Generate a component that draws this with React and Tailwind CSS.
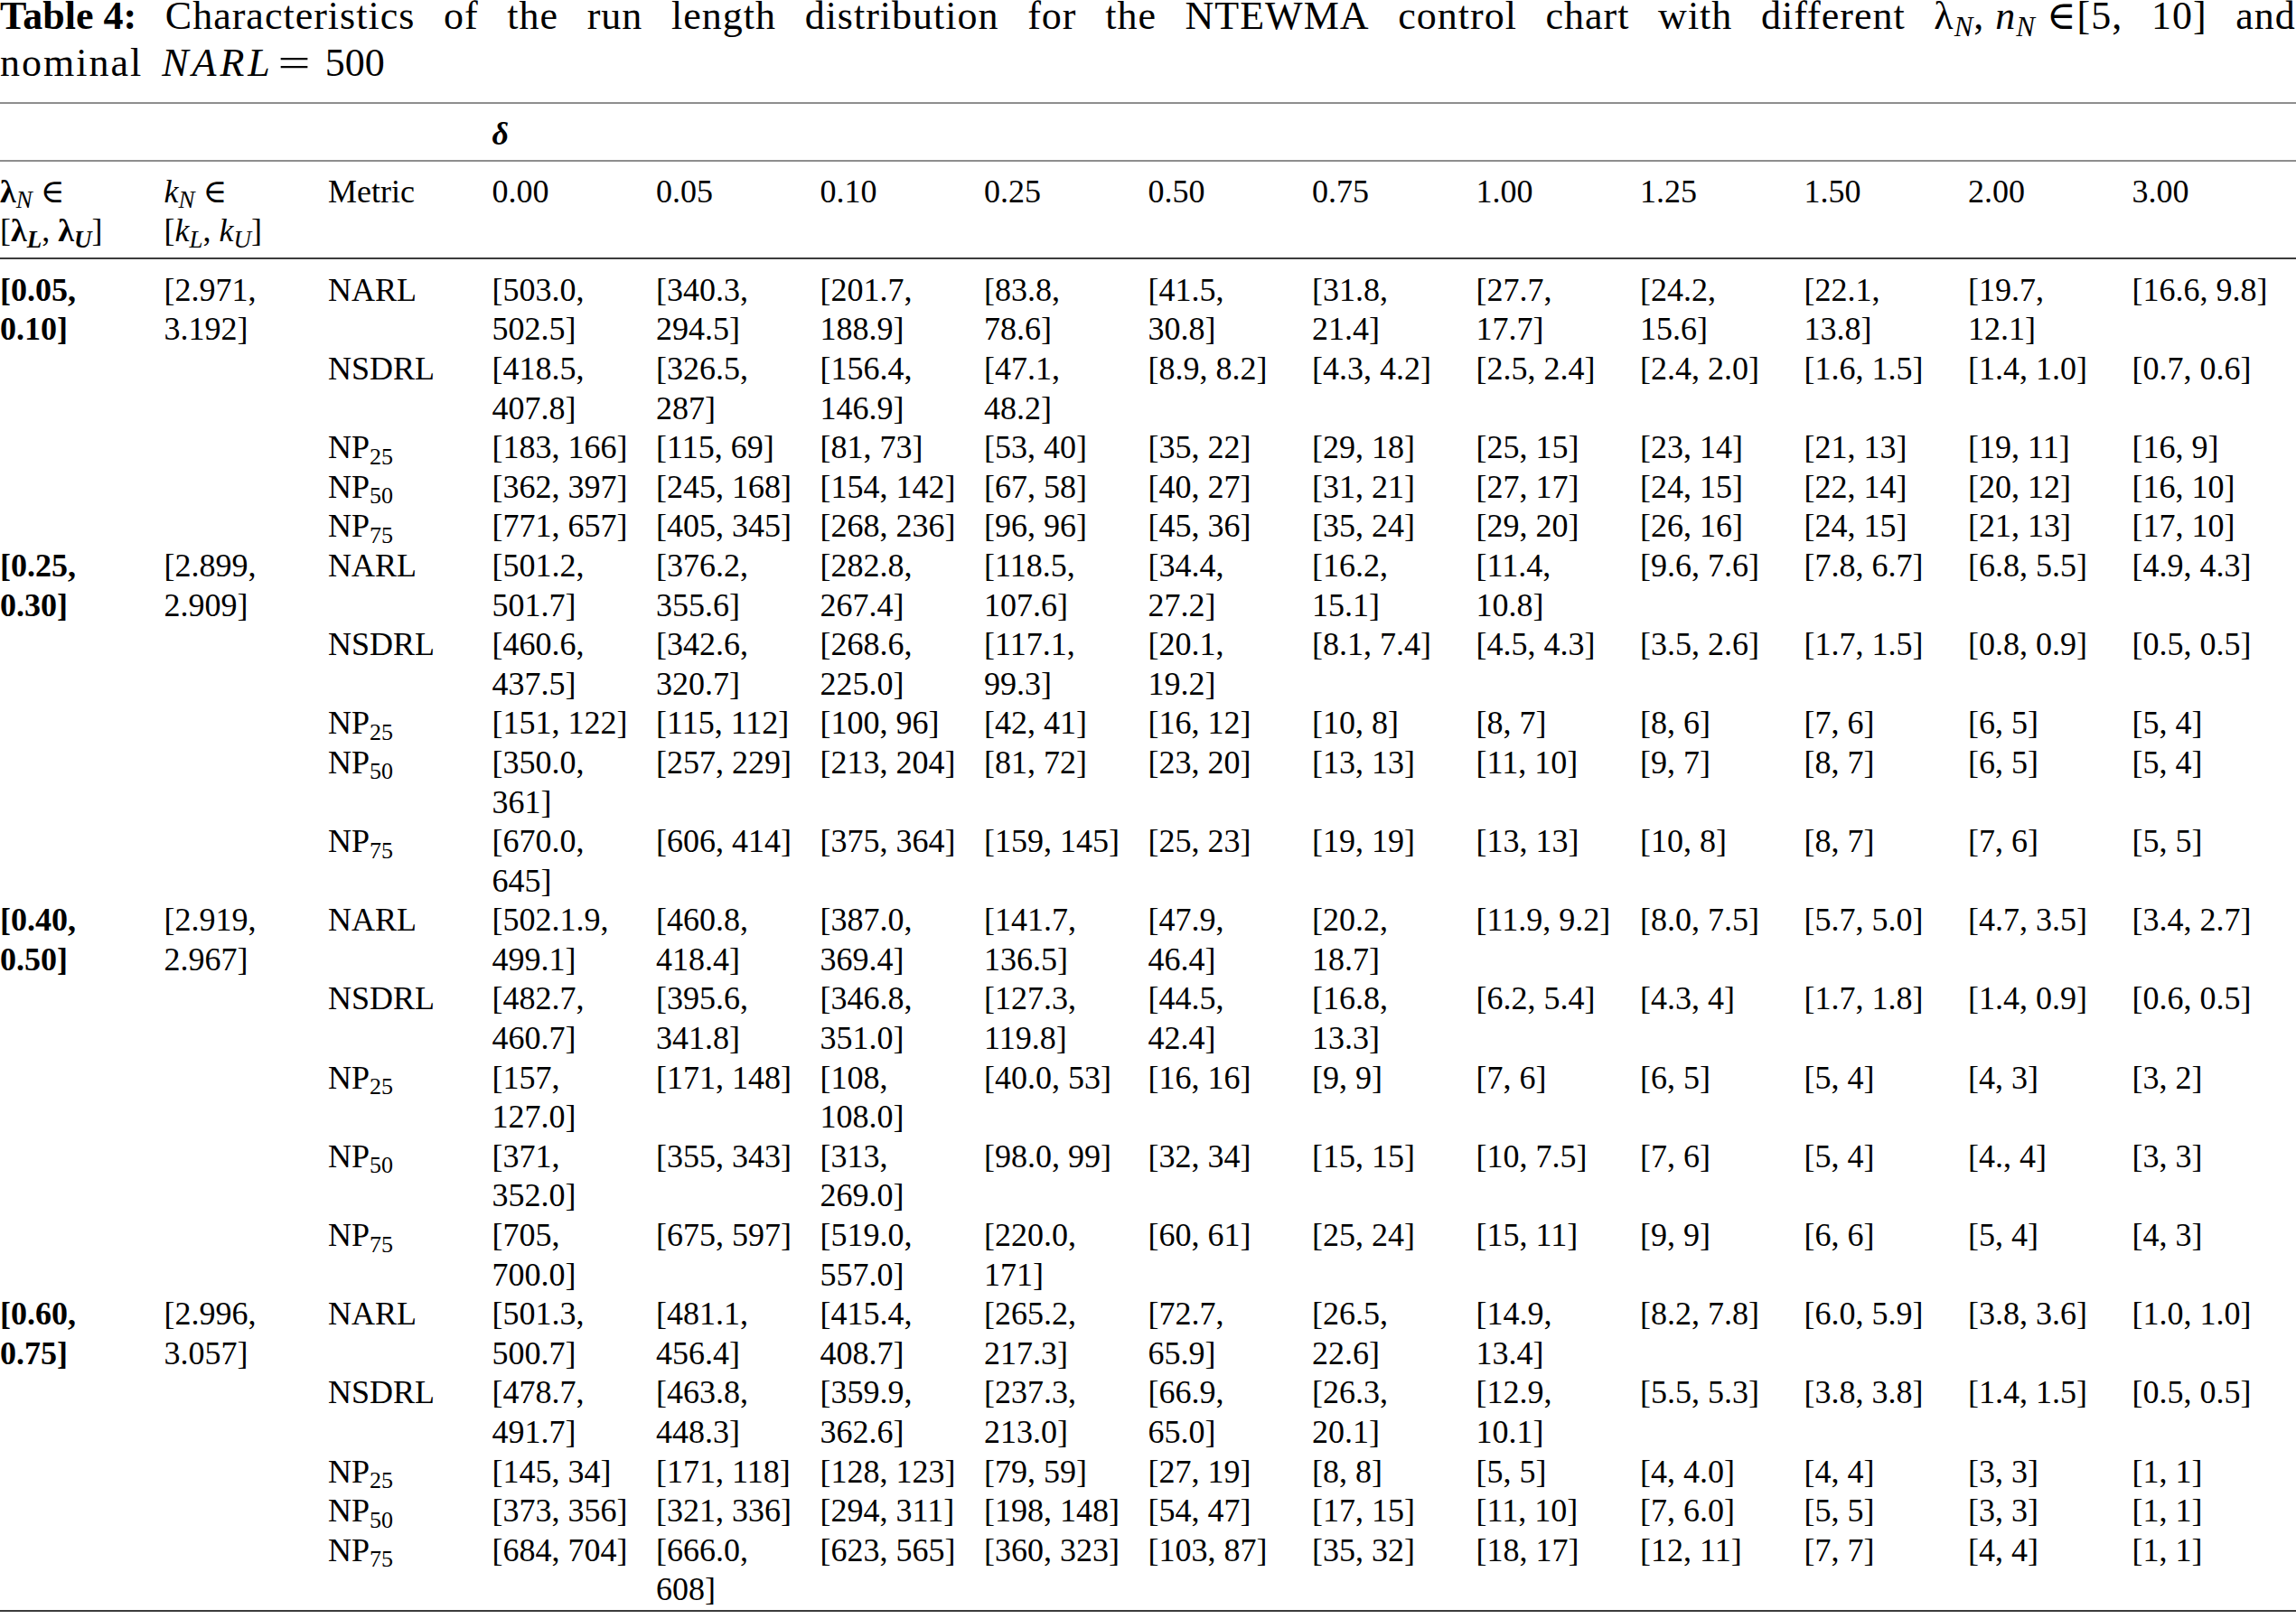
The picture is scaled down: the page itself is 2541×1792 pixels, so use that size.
const deltas = ["0.00", "0.05", "0.10", "0.25", "0.50", "0.75", "1.00", "1.25", "1.50", "2.00", "3.00"];

// "\n" marks where the cell wraps in the printed table
const blocks = [
  {
    lam: "[0.05,\n0.10]",
    k: "[2.971,\n3.192]",
    rows: [
      ["NARL", ["[503.0,\n502.5]", "[340.3,\n294.5]", "[201.7,\n188.9]", "[83.8,\n78.6]", "[41.5,\n30.8]", "[31.8,\n21.4]", "[27.7,\n17.7]", "[24.2,\n15.6]", "[22.1,\n13.8]", "[19.7,\n12.1]", "[16.6, 9.8]"]],
      ["NSDRL", ["[418.5,\n407.8]", "[326.5,\n287]", "[156.4,\n146.9]", "[47.1,\n48.2]", "[8.9, 8.2]", "[4.3, 4.2]", "[2.5, 2.4]", "[2.4, 2.0]", "[1.6, 1.5]", "[1.4, 1.0]", "[0.7, 0.6]"]],
      ["25", ["[183, 166]", "[115, 69]", "[81, 73]", "[53, 40]", "[35, 22]", "[29, 18]", "[25, 15]", "[23, 14]", "[21, 13]", "[19, 11]", "[16, 9]"]],
      ["50", ["[362, 397]", "[245, 168]", "[154, 142]", "[67, 58]", "[40, 27]", "[31, 21]", "[27, 17]", "[24, 15]", "[22, 14]", "[20, 12]", "[16, 10]"]],
      ["75", ["[771, 657]", "[405, 345]", "[268, 236]", "[96, 96]", "[45, 36]", "[35, 24]", "[29, 20]", "[26, 16]", "[24, 15]", "[21, 13]", "[17, 10]"]],
    ],
  },
  {
    lam: "[0.25,\n0.30]",
    k: "[2.899,\n2.909]",
    rows: [
      ["NARL", ["[501.2,\n501.7]", "[376.2,\n355.6]", "[282.8,\n267.4]", "[118.5,\n107.6]", "[34.4,\n27.2]", "[16.2,\n15.1]", "[11.4,\n10.8]", "[9.6, 7.6]", "[7.8, 6.7]", "[6.8, 5.5]", "[4.9, 4.3]"]],
      ["NSDRL", ["[460.6,\n437.5]", "[342.6,\n320.7]", "[268.6,\n225.0]", "[117.1,\n99.3]", "[20.1,\n19.2]", "[8.1, 7.4]", "[4.5, 4.3]", "[3.5, 2.6]", "[1.7, 1.5]", "[0.8, 0.9]", "[0.5, 0.5]"]],
      ["25", ["[151, 122]", "[115, 112]", "[100, 96]", "[42, 41]", "[16, 12]", "[10, 8]", "[8, 7]", "[8, 6]", "[7, 6]", "[6, 5]", "[5, 4]"]],
      ["50", ["[350.0,\n361]", "[257, 229]", "[213, 204]", "[81, 72]", "[23, 20]", "[13, 13]", "[11, 10]", "[9, 7]", "[8, 7]", "[6, 5]", "[5, 4]"]],
      ["75", ["[670.0,\n645]", "[606, 414]", "[375, 364]", "[159, 145]", "[25, 23]", "[19, 19]", "[13, 13]", "[10, 8]", "[8, 7]", "[7, 6]", "[5, 5]"]],
    ],
  },
  {
    lam: "[0.40,\n0.50]",
    k: "[2.919,\n2.967]",
    rows: [
      ["NARL", ["[502.1.9,\n499.1]", "[460.8,\n418.4]", "[387.0,\n369.4]", "[141.7,\n136.5]", "[47.9,\n46.4]", "[20.2,\n18.7]", "[11.9, 9.2]", "[8.0, 7.5]", "[5.7, 5.0]", "[4.7, 3.5]", "[3.4, 2.7]"]],
      ["NSDRL", ["[482.7,\n460.7]", "[395.6,\n341.8]", "[346.8,\n351.0]", "[127.3,\n119.8]", "[44.5,\n42.4]", "[16.8,\n13.3]", "[6.2, 5.4]", "[4.3, 4]", "[1.7, 1.8]", "[1.4, 0.9]", "[0.6, 0.5]"]],
      ["25", ["[157,\n127.0]", "[171, 148]", "[108,\n108.0]", "[40.0, 53]", "[16, 16]", "[9, 9]", "[7, 6]", "[6, 5]", "[5, 4]", "[4, 3]", "[3, 2]"]],
      ["50", ["[371,\n352.0]", "[355, 343]", "[313,\n269.0]", "[98.0, 99]", "[32, 34]", "[15, 15]", "[10, 7.5]", "[7, 6]", "[5, 4]", "[4., 4]", "[3, 3]"]],
      ["75", ["[705,\n700.0]", "[675, 597]", "[519.0,\n557.0]", "[220.0,\n171]", "[60, 61]", "[25, 24]", "[15, 11]", "[9, 9]", "[6, 6]", "[5, 4]", "[4, 3]"]],
    ],
  },
  {
    lam: "[0.60,\n0.75]",
    k: "[2.996,\n3.057]",
    rows: [
      ["NARL", ["[501.3,\n500.7]", "[481.1,\n456.4]", "[415.4,\n408.7]", "[265.2,\n217.3]", "[72.7,\n65.9]", "[26.5,\n22.6]", "[14.9,\n13.4]", "[8.2, 7.8]", "[6.0, 5.9]", "[3.8, 3.6]", "[1.0, 1.0]"]],
      ["NSDRL", ["[478.7,\n491.7]", "[463.8,\n448.3]", "[359.9,\n362.6]", "[237.3,\n213.0]", "[66.9,\n65.0]", "[26.3,\n20.1]", "[12.9,\n10.1]", "[5.5, 5.3]", "[3.8, 3.8]", "[1.4, 1.5]", "[0.5, 0.5]"]],
      ["25", ["[145, 34]", "[171, 118]", "[128, 123]", "[79, 59]", "[27, 19]", "[8, 8]", "[5, 5]", "[4, 4.0]", "[4, 4]", "[3, 3]", "[1, 1]"]],
      ["50", ["[373, 356]", "[321, 336]", "[294, 311]", "[198, 148]", "[54, 47]", "[17, 15]", "[11, 10]", "[7, 6.0]", "[5, 5]", "[3, 3]", "[1, 1]"]],
      ["75", ["[684, 704]", "[666.0,\n608]", "[623, 565]", "[360, 323]", "[103, 87]", "[35, 32]", "[18, 17]", "[12, 11]", "[7, 7]", "[4, 4]", "[1, 1]"]],
    ],
  },
];

const Metric = ({ name }) => {
  if (name === "NARL" || name === "NSDRL") return name;
  return (
    <>
      NP<sub className="text-[26px]">{name}</sub>
    </>
  );
};

const App = () => {
  return (
    <div className="w-[2541px] min-h-[1792px] bg-white text-black font-['Liberation_Serif','DejaVu_Serif',serif] overflow-hidden">
      {/* caption */}
      <div className="-mt-2 text-[44px] leading-[52px]">
        <p className="whitespace-nowrap flex justify-between tracking-[1px]">
          <span className="tracking-normal"><b>Table 4:</b></span>
          <span>Characteristics</span>
          <span>of</span>
          <span>the</span>
          <span>run</span>
          <span>length</span>
          <span>distribution</span>
          <span>for</span>
          <span>the</span>
          <span>NTEWMA</span>
          <span>control</span>
          <span>chart</span>
          <span>with</span>
          <span>different</span>
          <span>
            λ<sub className="text-[31px] italic">N</sub>, <i>n</i>
            <sub className="text-[31px] italic">N</sub> ∈[5,
          </span>
          <span>10]</span>
          <span>and</span>
        </p>
        <p className="whitespace-nowrap">
          <span className="tracking-[2px]">nominal</span>
          <i className="ml-[21px] tracking-[4px]">NARL</i>
          <span className="ml-[4px] inline-block w-[37px] text-center scale-x-[1.45]">=</span>
          <span className="ml-[16px]">500</span>
        </p>
      </div>

      <div className="mt-[17px] text-[36px] leading-[43.6px]">
        {/* delta row */}
        <div className="grid grid-cols-[repeat(14,minmax(0,1fr))] border-t-2 border-[#8e8e8e] pt-[12px] pb-[6px]">
          <div className="col-start-4 col-span-11 font-bold italic">δ</div>
        </div>

        {/* column heads */}
        <div className="grid grid-cols-[repeat(14,minmax(0,1fr))] border-t-2 border-[#8e8e8e] pt-[12px] pb-[7px]">
          <div>
            <b>λ</b>
            <sub className="text-[27px] italic">N</sub> ∈
            <br />[<b>λ</b>
            <sub className="text-[27px] italic font-bold">L</sub>, <b>λ</b>
            <sub className="text-[27px] italic font-bold">U</sub>]
          </div>
          <div>
            <i>k</i>
            <sub className="text-[27px] italic">N</sub> ∈
            <br />[<i>k</i>
            <sub className="text-[27px] italic">L</sub>, <i>k</i>
            <sub className="text-[27px] italic">U</sub>]
          </div>
          <div>Metric</div>
          {deltas.map((d) => (
            <div key={d}>{d}</div>
          ))}
        </div>

        {/* body */}
        <div className="border-t-2 border-b-2 border-t-[#3c3c3c] border-b-[#3c3c3c] pt-[13px]">
          {blocks.map((block) =>
            block.rows.map(([name, vals], i) => (
              <div key={block.lam + name} className="grid grid-cols-[repeat(14,minmax(0,1fr))]">
                <div className="font-bold whitespace-pre">{i === 0 ? block.lam : ""}</div>
                <div className="whitespace-pre">{i === 0 ? block.k : ""}</div>
                <div className="whitespace-nowrap">
                  <Metric name={name} />
                </div>
                {vals.map((v, j) => (
                  <div key={j} className="whitespace-pre">
                    {v}
                  </div>
                ))}
              </div>
            ))
          )}
        </div>
      </div>
    </div>
  );
};

export default App;
